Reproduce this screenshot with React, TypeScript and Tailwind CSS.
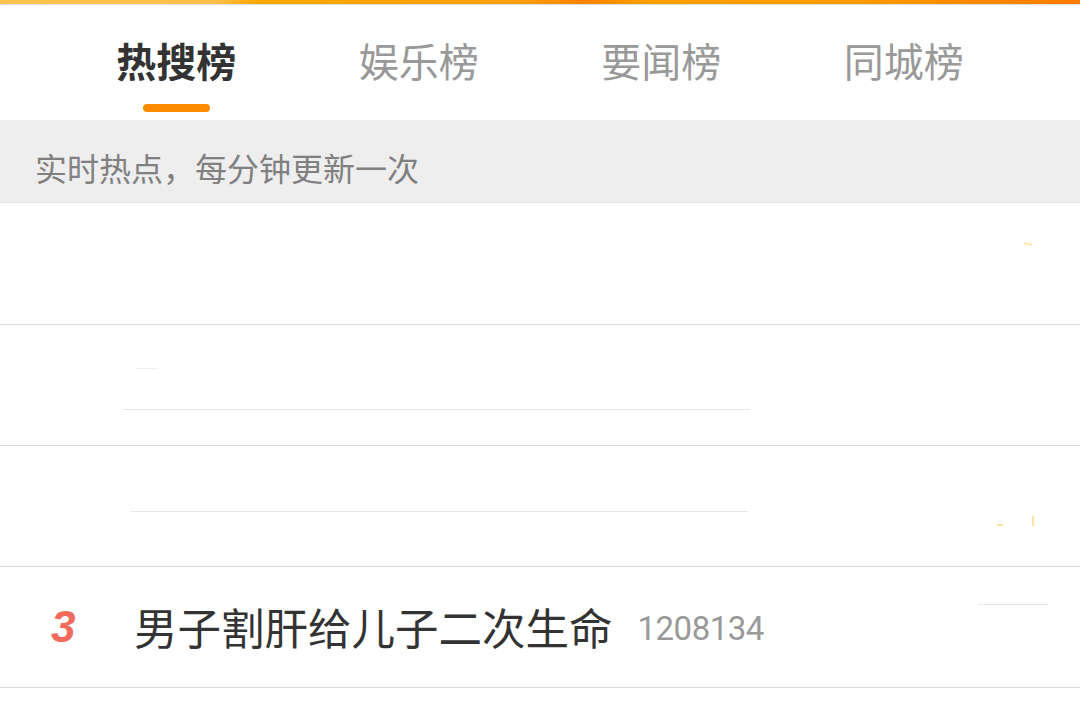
type Tab = { label: string; active?: boolean };

const tabs: Tab[] = [
  { label: '热搜榜', active: true },
  { label: '娱乐榜' },
  { label: '要闻榜' },
  { label: '同城榜' },
];

const cjk = { fontFamily: '"Noto Sans CJK SC", "Noto Sans", sans-serif' };

function TopBar() {
  return (
    <div>
      <div className="h-[4px] bg-[linear-gradient(100deg,#ffc24f_0%,#ffbe45_20%,#ffa800_24%,#ff9f10_48%,#ff8200_54%,#ffa000_60%,#ff9a00_80%,#ff7a00_100%)]" />
      <div className="h-px bg-[#dedede]" />
    </div>
  );
}

function Tabs() {
  return (
    <div className="grid h-[115px] grid-cols-4 px-[55px]">
      {tabs.map((t) => (
        <div key={t.label} className="flex flex-col items-center pt-[35px]">
          <span
            className={
              t.active
                ? 'text-[40px] leading-[40px] font-bold text-[#333333]'
                : 'text-[40px] leading-[40px] text-[#999999]'
            }
          >
            {t.label}
          </span>
          {t.active && <span className="mt-[24px] h-[8px] w-[67px] rounded-full bg-[#ff8c00]" />}
        </div>
      ))}
    </div>
  );
}

function Banner() {
  return (
    <div className="h-[83px] border-b border-[#e2e2e2] bg-[#eeeeee] px-[35px] pt-[31px]">
      <p className="text-[32px] leading-[32px] text-[#808080]">实时热点，每分钟更新一次</p>
    </div>
  );
}

export default function App() {
  return (
    <div className="h-[707px] w-[1080px] overflow-hidden bg-white" style={cjk}>
      <TopBar />
      <Tabs />
      <Banner />

      {/* row 1: image placeholder, only a faint speck left */}
      <div className="flex h-[122px] justify-end border-b border-[#dcdcdc] pr-[48px] pt-[40px]">
        <span className="h-[2px] w-[8px] rotate-12 bg-[#ffd98a] opacity-70" />
      </div>

      {/* row 2 */}
      <div className="flex h-[121px] flex-col border-b border-[#dcdcdc] pl-[123px] pt-[43px]">
        <span className="ml-[13px] h-px w-[22px] bg-[#f0f0f0]" />
        <span className="mt-[40px] h-px w-[627px] bg-[#e6e6e6]" />
      </div>

      {/* row 3 */}
      <div className="flex h-[121px] items-start justify-between border-b border-[#dcdcdc] pl-[131px] pr-[46px] pt-[65px]">
        <span className="h-px w-[617px] bg-[#e6e6e6]" />
        <div className="flex items-end gap-[29px] pt-[5px]">
          <span className="h-[2px] w-[6px] bg-[#ffe3a0]" />
          <span className="h-[10px] w-[2px] bg-[#ffe3a0]" />
        </div>
      </div>

      {/* row 4 */}
      <div className="flex h-[121px] items-center border-b border-[#dcdcdc] pl-[51px] pr-[32px]">
        <span
          className="w-[31px] shrink-0 text-[44px] font-bold italic leading-none text-[#f26c5e]"
          style={{ fontFamily: '"Liberation Sans", Arial, sans-serif' }}
        >
          3
        </span>
        <span className="ml-[52px] text-[43.5px] leading-none text-[#333333]">男子割肝给儿子二次生命</span>
        <span
          className="ml-[25px] mt-[2px] text-[33px] leading-none tracking-[-0.5px] text-[#999999]"
          style={{ fontFamily: 'Roboto, sans-serif' }}
        >
          1208134
        </span>
        <span className="ml-auto mb-[46px] h-px w-[70px] bg-[#e6e6e6]" />
      </div>
    </div>
  );
}
